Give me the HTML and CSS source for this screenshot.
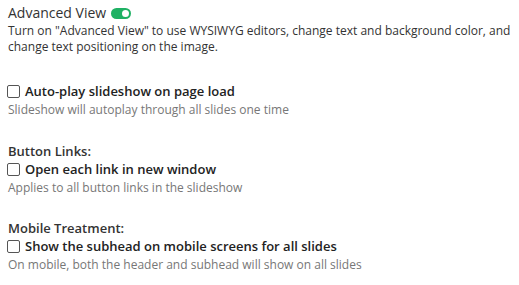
FILE: index.html
```html
<!DOCTYPE html>
<html>
<head>
<meta charset="utf-8">
<link rel="stylesheet" href="styles.css">
</head>
<body>
<div class="panel">
  <div class="adv">
    <div class="adv-title">Advanced View <span class="toggle"><span class="knob"></span></span></div>
    <div class="adv-desc">Turn on "Advanced View" to use WYSIWYG editors, change text and background color, and change text positioning on the image.</div>
  </div>
  <div class="group first">
    <label class="check"><span class="box"></span>Auto-play slideshow on page load</label>
    <div class="help">Slideshow will autoplay through all slides one time</div>
  </div>
  <div class="group second">
    <div class="group-title">Button Links:</div>
    <label class="check"><span class="box"></span>Open each link in new window</label>
    <div class="help">Applies to all button links in the slideshow</div>
  </div>
  <div class="group third">
    <div class="group-title">Mobile Treatment:</div>
    <label class="check"><span class="box"></span>Show the subhead on mobile screens for all slides</label>
    <div class="help">On mobile, both the header and subhead will show on all slides</div>
  </div>
</div>
</body>
</html>
```
FILE: styles.css
```css
html, body { margin: 0; padding: 0; background: #fff; }
body { font-family: "Open Sans", sans-serif; color: #333; }
.panel { padding: 3px 8px 0 8px; }
.adv-title { font-size: 14px; line-height: 20px; color: #333; display: flex; align-items: center; gap: 5px; }
.toggle { width: 20px; height: 11px; border-radius: 6px; background: #1fb164; position: relative; display: inline-block; margin-top: 1px; }
.knob { position: absolute; right: 2px; top: 2px; width: 7px; height: 7px; border-radius: 50%; background: #fff; }
.adv-desc { font-size: 12px; line-height: 16px; color: #333; }
.group { margin-top: 24px; }
.group.first { margin-top: 27px; }
.group.third { margin-top: 23px; }
.group-title { font-size: 13px; font-weight: 600; line-height: 18px; color: #333; }
.check { display: flex; align-items: center; gap: 5px; font-size: 13px; font-weight: 600; line-height: 18px; color: #222; }
.box { width: 11px; height: 11px; border: 1px solid #555; border-radius: 2px; background: #fff; flex: none; margin-left: -1px; }
.help { font-size: 12px; line-height: 16px; color: #777; margin-top: 2px; }
```
